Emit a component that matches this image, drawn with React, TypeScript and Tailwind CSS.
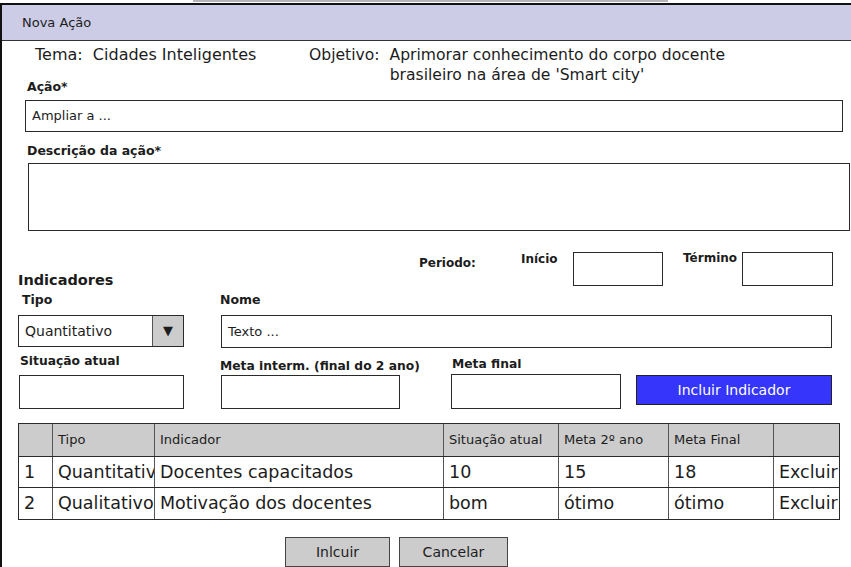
const cols = 'grid grid-cols-[34px_102px_289px_115px_110px_105px_67px]'

const rows = [
  ['1', 'Quantitativo', 'Docentes capacitados', '10', '15', '18', 'Excluir'],
  ['2', 'Qualitativo', 'Motivação dos docentes', 'bom', 'ótimo', 'ótimo', 'Excluir'],
]

function Box({ className = '' }: { className?: string }) {
  return <div className={`border border-[#2a2a2a] bg-white ${className}`} />
}

export default function App() {
  return (
    <div className="w-[851px] h-[567px] overflow-hidden bg-white text-[#1c1c1c] font-['Comic_Sans_MS','DejaVu_Sans',sans-serif]">
      <div className="ml-[193px] w-[475px] h-[2px] bg-[#b5b5b5] mb-[1px]" />
      <div className="h-[564px] border-l-2 border-t-2 border-[#111] flex flex-col">
        <div className="h-[36px] shrink-0 bg-[#ccccE6] border-b border-[#333] px-[20px] flex items-center text-[13px]">
          Nova Ação
        </div>

        <div className="flex mt-[4px] h-[34px] text-[16px] leading-[20px]">
          <div className="ml-[33px] w-[265px] whitespace-pre">Tema:  Cidades Inteligentes</div>
          <div className="w-[434px] text-center whitespace-pre text-[15.6px]">
            Objetivo:  Aprimorar conhecimento do corpo docente
            <br />
            brasileiro na área de 'Smart city'
          </div>
        </div>

        <div className="ml-[25px] h-[16px] leading-[16px] text-[12.5px] font-bold">Ação*</div>
        <div className="ml-[23px] mt-[5px] w-[818px] h-[32px] border border-[#2a2a2a] flex items-center pl-[6px] text-[13px]">
          Ampliar a ...
        </div>

        <div className="ml-[25px] mt-[11px] h-[16px] leading-[16px] text-[12.5px] font-bold">Descrição da ação*</div>
        <Box className="ml-[26px] mt-[4px] w-[822px] h-[68px]" />

        <div className="flex items-start mt-[17px] h-[40px] font-bold">
          <div className="w-[417px] pl-[16px] pt-[23px] text-[14.5px] leading-[18px]">Indicadores</div>
          <div className="w-[102px] pt-[7px] text-[12px] leading-[16px]">Periodo:</div>
          <div className="w-[52px] pt-[3px] text-[12px] leading-[16px]">Início</div>
          <Box className="w-[90px] h-[34px] mt-[4px]" />
          <div className="w-[20px]" />
          <div className="w-[59px] pt-[2px] text-[12px] leading-[16px]">Término</div>
          <Box className="w-[91px] h-[34px] mt-[4px]" />
        </div>

        <div className="flex mt-[4px] h-[16px] leading-[16px] text-[12.5px] font-bold">
          <div className="w-[218px] pl-[20px]">Tipo</div>
          <div>Nome</div>
        </div>

        <div className="flex mt-[7px]">
          <div className="ml-[16px] w-[166px] h-[32px] border border-[#2a2a2a] flex text-[14px]">
            <div className="flex-1 flex items-center pl-[6px]">Quantitativo</div>
            <div className="w-[31px] bg-[#cccccc] border-l border-[#555] flex items-center justify-center text-[13px]">▼</div>
          </div>
          <div className="ml-[37px] w-[611px] h-[33px] border border-[#2a2a2a] flex items-center pl-[6px] text-[13px]">
            Texto ...
          </div>
        </div>

        <div className="flex items-start mt-[5px] h-[20px] leading-[16px] text-[12.3px] font-bold">
          <div className="w-[218px] pl-[18px]">Situação atual</div>
          <div className="w-[232px] pt-[5px]">Meta interm. (final do 2 ano)</div>
          <div className="pt-[3px]">Meta final</div>
        </div>

        <div className="flex items-start mt-[2px]">
          <Box className="ml-[17px] w-[165px] h-[34px]" />
          <Box className="ml-[37px] w-[179px] h-[34px]" />
          <Box className="ml-[51px] -mt-[1px] w-[170px] h-[35px]" />
          <div className="ml-[15px] w-[196px] h-[30px] bg-[#3535fb] border border-[#222] text-white text-[14px] flex items-center justify-center">
            Incluir Indicador
          </div>
        </div>

        <div className="ml-[16px] mt-[14px] w-[822px] border border-[#2a2a2a]">
          <div className={`${cols} h-[33px] bg-[#cccccc] text-[13px] border-b border-[#2a2a2a]`}>
            {['', 'Tipo', 'Indicador', 'Situação atual', 'Meta 2º ano', 'Meta Final', ''].map((h, i) => (
              <div key={i} className={`flex items-center pl-[5px] whitespace-nowrap overflow-hidden ${i < 6 ? 'border-r border-[#555]' : ''}`}>
                {h}
              </div>
            ))}
          </div>
          {rows.map((r, ri) => (
            <div key={ri} className={`${cols} ${ri === 0 ? 'h-[31px] border-b border-[#2a2a2a]' : 'h-[31px]'} text-[17.5px]`}>
              {r.map((c, i) => (
                <div key={i} className={`flex items-center pl-[5px] whitespace-nowrap overflow-hidden ${i < 6 ? 'border-r border-[#555]' : ''}`}>
                  {c}
                </div>
              ))}
            </div>
          ))}
        </div>

        <div className="flex mt-[17px] ml-[283px] gap-[9px] text-[14px]">
          <div className="w-[105px] h-[30px] bg-[#cccccc] border border-[#444] flex items-center justify-center">Inlcuir</div>
          <div className="w-[109px] h-[30px] bg-[#cccccc] border border-[#444] flex items-center justify-center">Cancelar</div>
        </div>
      </div>
    </div>
  )
}
